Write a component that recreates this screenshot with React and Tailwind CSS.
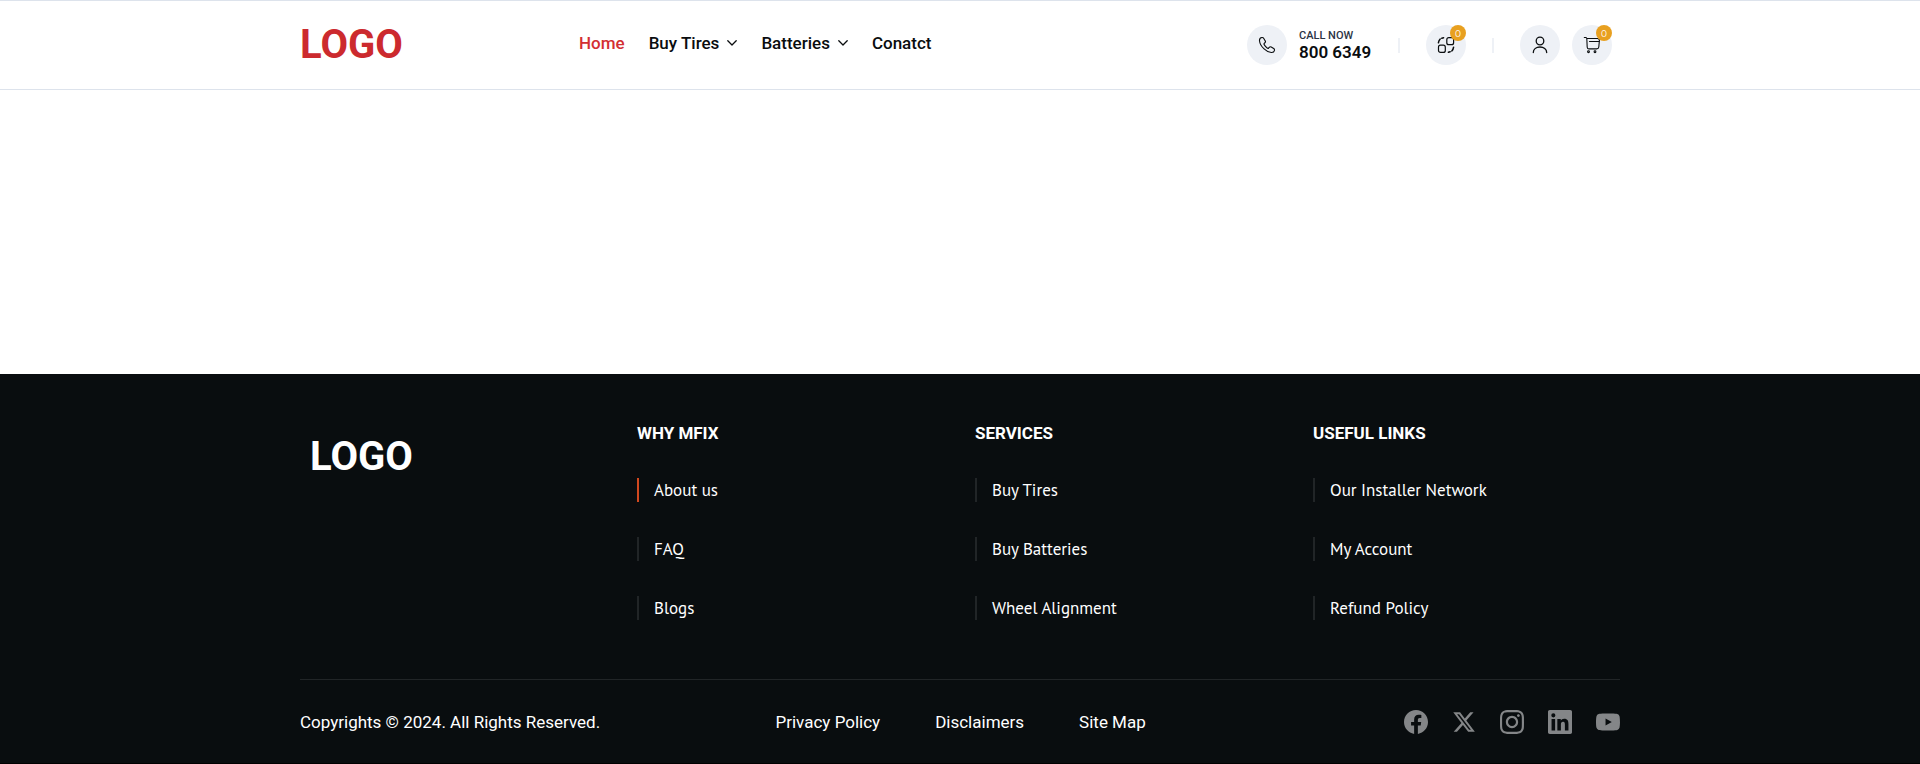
const PATHS = {
  facebook:
    "M24 12.073c0-6.627-5.373-12-12-12s-12 5.373-12 12c0 5.99 4.388 10.954 10.125 11.854v-8.385H7.078v-3.47h3.047V9.43c0-3.007 1.792-4.669 4.533-4.669 1.312 0 2.686.235 2.686.235v2.953H15.83c-1.491 0-1.956.925-1.956 1.874v2.25h3.328l-.532 3.47h-2.796v8.385C19.612 23.027 24 18.062 24 12.073z",
  x: "M18.244 2.25h3.308l-7.227 8.26 8.502 11.24H16.17l-5.214-6.817L4.99 21.75H1.68l7.73-8.835L1.254 2.25H8.08l4.713 6.231zm-1.161 17.52h1.833L7.084 4.126H5.117z",
  instagram:
    "M12 0C8.74 0 8.333.015 7.053.072 5.775.132 4.905.333 4.14.63c-.789.306-1.459.717-2.126 1.384S.935 3.35.63 4.14C.333 4.905.131 5.775.072 7.053.012 8.333 0 8.74 0 12s.015 3.667.072 4.947c.06 1.277.261 2.148.558 2.913.306.788.717 1.459 1.384 2.126.667.666 1.336 1.079 2.126 1.384.766.296 1.636.499 2.913.558C8.333 23.988 8.74 24 12 24s3.667-.015 4.947-.072c1.277-.06 2.148-.262 2.913-.558.788-.306 1.459-.718 2.126-1.384.666-.667 1.079-1.335 1.384-2.126.296-.765.499-1.636.558-2.913.06-1.28.072-1.687.072-4.947s-.015-3.667-.072-4.947c-.06-1.277-.262-2.149-.558-2.913-.306-.789-.718-1.459-1.384-2.126C21.319 1.347 20.651.935 19.86.63c-.765-.297-1.636-.499-2.913-.558C15.667.012 15.26 0 12 0zm0 2.16c3.203 0 3.585.016 4.85.071 1.17.055 1.805.249 2.227.415.562.217.96.477 1.382.896.419.42.679.819.896 1.381.164.422.36 1.057.413 2.227.057 1.266.07 1.646.07 4.85s-.015 3.585-.074 4.85c-.061 1.17-.256 1.805-.421 2.227-.224.562-.479.96-.899 1.382-.419.419-.824.679-1.38.896-.42.164-1.065.36-2.235.413-1.274.057-1.649.07-4.859.07-3.211 0-3.586-.015-4.859-.074-1.171-.061-1.816-.256-2.236-.421-.569-.224-.96-.479-1.379-.899-.421-.419-.69-.824-.9-1.38-.165-.42-.359-1.065-.42-2.235-.045-1.26-.061-1.649-.061-4.844 0-3.196.016-3.586.061-4.861.061-1.17.255-1.814.42-2.234.21-.57.479-.96.9-1.381.419-.419.81-.689 1.379-.898.42-.166 1.051-.361 2.221-.421 1.275-.045 1.65-.06 4.859-.06zm0 3.678c-3.405 0-6.162 2.76-6.162 6.162 0 3.405 2.76 6.162 6.162 6.162 3.405 0 6.162-2.76 6.162-6.162 0-3.405-2.76-6.162-6.162-6.162zM12 16c-2.21 0-4-1.79-4-4s1.79-4 4-4 4 1.79 4 4-1.79 4-4 4zm7.846-10.405c0 .795-.646 1.44-1.44 1.44-.795 0-1.44-.646-1.44-1.44 0-.794.646-1.439 1.44-1.439.793-.001 1.44.645 1.44 1.439z",
  linkedin:
    "M20.447 20.452h-3.554v-5.569c0-1.328-.027-3.037-1.852-3.037-1.853 0-2.136 1.445-2.136 2.939v5.667H9.351V9h3.414v1.561h.046c.477-.9 1.637-1.85 3.37-1.85 3.601 0 4.267 2.37 4.267 5.455v6.286zM5.337 7.433a2.062 2.062 0 0 1-2.063-2.065 2.064 2.064 0 1 1 2.063 2.065zm1.782 13.019H3.555V9h3.564v11.452zM22.225 0H1.771C.792 0 0 .774 0 1.729v20.542C0 23.227.792 24 1.771 24h20.451C23.2 24 24 23.227 24 22.271V1.729C24 .774 23.2 0 22.222 0h.003z",
  youtube:
    "M23.498 6.186a3.016 3.016 0 0 0-2.122-2.136C19.505 3.545 12 3.545 12 3.545s-7.505 0-9.377.505A3.017 3.017 0 0 0 .502 6.186C0 8.07 0 12 0 12s0 3.93.502 5.814a3.016 3.016 0 0 0 2.122 2.136c1.871.505 9.376.505 9.376.505s7.505 0 9.377-.505a3.015 3.015 0 0 0 2.122-2.136C24 15.93 24 12 24 12s0-3.93-.502-5.814zM9.545 15.568V8.432L15.818 12l-6.273 3.568z",
};

function Glyph({ children }) {
  return (
    <svg
      width="18"
      height="18"
      viewBox="0 0 18 18"
      fill="none"
      stroke="#0a0d0f"
      strokeWidth="1.1"
      strokeLinecap="round"
      strokeLinejoin="round"
    >
      {children}
    </svg>
  );
}

function RoundButton({ badge, label, children }) {
  return (
    <button
      aria-label={label}
      className="relative flex size-10 items-center justify-center rounded-full bg-[#eef1f6]"
    >
      {children}
      {badge !== undefined && (
        <span className="absolute top-0 right-0 flex size-4 items-center justify-center rounded-full bg-[#e8a020] font-['Montserrat','DejaVu_Sans',sans-serif] text-[9px] leading-none text-white">
          {badge}
        </span>
      )}
    </button>
  );
}

function Divider() {
  return <span className="h-[15px] w-0.5 bg-[#eef1f6]" />;
}

function Chevron() {
  return (
    <svg width="10" height="6" viewBox="0 0 10 6" fill="none" stroke="#0a0d0f" strokeWidth="1.3" strokeLinecap="round" strokeLinejoin="round">
      <path d="M.8.8 5 5 9.2.8" />
    </svg>
  );
}

function Header() {
  return (
    <header className="h-[90px] border-y border-[#dde3ec] bg-white">
      <div className="mx-auto flex h-[88px] w-[1320px] items-center">
        <a className="w-[279px] text-[40px] leading-none font-bold text-[#cc2a2e]">LOGO</a>
        <nav className="flex items-center gap-[24px] pb-1 text-[17px] leading-6 font-medium whitespace-nowrap text-[#0a0d0f]">
          <a className="text-[#d32f33]">Home</a>
          <a className="flex items-center gap-2">
            Buy Tires <Chevron />
          </a>
          <a className="flex items-center gap-2">
            Batteries <Chevron />
          </a>
          <a>Conatct</a>
        </nav>
        <div className="mr-2 ml-auto flex items-center">
          <RoundButton label="Call">
            <Glyph>
              <path d="M3.9 1.5C2.5 1.7 1.4 3 1.5 4.7c.3 3.2 2.2 6 4.6 8.1 2 1.9 4.6 3.5 7.2 3.7 1.6.1 2.9-.7 3.2-2.1.1-.9-.2-1.5-.8-1.9l-2.5-1.5c-.7-.4-1.5-.2-2 .4l-.5.6c-.4.4-1 .4-1.5 0C7.9 10.9 6.9 9.8 6.2 8.6c-.3-.5-.2-1 .2-1.4l.5-.4c.6-.5.7-1.3.3-1.900L5.800 2.400c-.4-.7-1.100-1-1.900-.9z" />
            </Glyph>
          </RoundButton>
          <div className="ml-3 flex w-[72px] flex-col pt-px whitespace-nowrap">
            <span className="text-[11px] leading-[13px] font-medium text-[#2b3445]">CALL NOW</span>
            <span className="text-[17px] leading-[20px] font-semibold text-[#0a0d0f]">800 6349</span>
          </div>
          <div className="ml-[27px] flex items-center gap-[26px]">
            <Divider />
            <RoundButton label="Compare" badge={0}>
              <Glyph>
                <rect x="9.8" y="1.7" width="6.8" height="7" rx="2" strokeWidth="1.2" />
                <rect x="1.5" y="9.2" width="6.8" height="7.2" rx="2" strokeWidth="1.2" />
                <path d="M1.4 6.8C1.600 5.200 2.300 3.900 3.200 3M4.800 2.200 6.600 1.700" strokeWidth="1.5" />
                <path d="M16.600 11.200c-.2 1.600-.9 2.900-1.800 3.800M13.200 15.800 11.400 16.300" strokeWidth="1.5" />
              </Glyph>
            </RoundButton>
            <Divider />
            <div className="flex gap-3">
              <RoundButton label="Account">
                <Glyph>
                  <circle cx="9" cy="5" r="3.8" strokeWidth="1.3" />
                  <path d="M2.300 16.500c0-3.500 3-5.500 6.700-5.500s6.700 2 6.700 5.500" strokeWidth="1.3" />
                </Glyph>
              </RoundButton>
              <RoundButton label="Cart" badge={0}>
                <Glyph>
                  <path d="M1.300 1.500h1.500c.6 0 1 .4 1 1l.4 8.700c.1 1 .8 1.700 1.800 1.700h7.700c1.100 0 2-.8 2.100-1.900l.6-6.500c.1-1.100-.7-2-1.800-2H3.900" />
                  <path d="M6.500 5.500h9.600" />
                  <circle cx="5.500" cy="15.700" r=".9" />
                  <circle cx="12" cy="15.700" r=".9" />
                </Glyph>
              </RoundButton>
            </div>
          </div>
        </div>
      </div>
    </header>
  );
}

const COLUMNS = [
  {
    title: "WHY MFIX",
    links: [{ text: "About us", active: true }, { text: "FAQ" }, { text: "Blogs" }],
  },
  {
    title: "SERVICES",
    links: [{ text: "Buy Tires" }, { text: "Buy Batteries" }, { text: "Wheel Alignment" }],
  },
  {
    title: "USEFUL LINKS",
    links: [{ text: "Our Installer Network" }, { text: "My Account" }, { text: "Refund Policy" }],
  },
];

function Footer() {
  return (
    <footer className="h-[389px] bg-[#090d0f] text-white">
      <div className="mx-auto flex h-full w-[1320px] flex-col">
        <div className="flex h-[306px] shrink-0 border-b border-[#212527] pt-[47px]">
          <a className="w-[337px] shrink-0 pt-4 pl-2.5 text-[40px] leading-none font-bold">LOGO</a>
          {COLUMNS.map((col) => (
            <section key={col.title} className="w-[338px] shrink-0 last:w-[307px]">
              <h3 className="text-[17px] leading-[24px] font-bold">{col.title}</h3>
              <ul className="mt-[33px] flex flex-col gap-[35px]">
                {col.links.map((link) => (
                  <li
                    key={link.text}
                    className={
                      (link.active ? "border-[#d1481f]" : "border-[#212527]") +
                      " h-6 border-l-2 pl-[15px] font-['PT_Sans','Noto_Sans',sans-serif] text-[17px] leading-6"
                    }
                  >
                    {link.text}
                  </li>
                ))}
              </ul>
            </section>
          ))}
        </div>
        <div className="flex h-[84px] shrink-0 items-center">
          <p className="w-[475.500px] text-[17px] leading-6">Copyrights © 2024. All Rights Reserved.</p>
          <nav className="flex gap-[55px] text-[17px] leading-6">
            <a>Privacy Policy</a>
            <a>Disclaimers</a>
            <a>Site Map</a>
          </nav>
          <div className="ml-auto flex gap-6">
            {Object.entries(PATHS).map(([name, d]) => (
              <svg key={name} width="24" height="24" viewBox="0 0 24 24" fill="#848688">
                <path d={d} />
              </svg>
            ))}
          </div>
        </div>
      </div>
    </footer>
  );
}

export default function App() {
  return (
    <div className="flex h-[764px] flex-col bg-black font-[Roboto,sans-serif]">
      <Header />
      <main className="h-[284px] bg-white" />
      <Footer />
    </div>
  );
}
